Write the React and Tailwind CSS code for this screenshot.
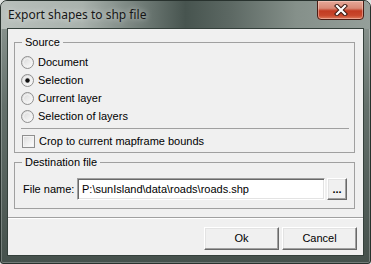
import React from "react";

const font = "font-['Liberation_Sans',Arial,sans-serif]";

const Radio = ({ checked, label }) => (
  <div className="flex items-center h-[18px] pl-[6px] gap-[4px]">
    <svg width="13" height="13" viewBox="0 0 13 13">
      <defs>
        <linearGradient id="radioFill" x1="0" y1="0" x2="1" y2="1">
          <stop offset="0" stopColor="#d4d4d4" />
          <stop offset="1" stopColor="#ffffff" />
        </linearGradient>
      </defs>
      <circle cx="6.5" cy="6.5" r="6" fill="url(#radioFill)" stroke="#8f8f8f" />
      <circle cx="6.5" cy="6.5" r="4" fill="none" stroke="#f4f4f4" />
      {checked && <circle cx="6.5" cy="6.5" r="2.2" fill="#111" />}
    </svg>
    <span>{label}</span>
  </div>
);

const ClassicButton = ({ children, className = "" }) => (
  <button
    className={`bg-[#f0f0f0] border border-t-white border-l-white border-b-[#696969] border-r-[#696969] shadow-[inset_-1px_-1px_0_#a0a0a0,inset_1px_1px_0_#e3e3e3] text-black ${className}`}
  >
    {children}
  </button>
);

const App = () => {
  return (
    <div className="w-[371px] h-[264px] bg-[#dfe3e1]">
      <div className="relative w-full h-full flex flex-col rounded-t-[7px] rounded-b-[3px] border border-[#28322e] overflow-hidden bg-[linear-gradient(180deg,#929c97_0%,#64706b_40%,#45514c_100%)] shadow-[inset_0_0_0_1px_rgba(255,255,255,0.25)]">
        {/* title bar */}
        <div className="h-[28px] shrink-0 flex items-center pl-[7px] bg-[linear-gradient(90deg,#b9c0bc_0%,#a9b2ad_22%,#6a7671_40%,#47544f_50%,#5c6863_62%,#85908a_80%,#959f9a_100%)]">
          <span className="font-['Noto_Sans',sans-serif] text-[12px] text-[#161616] [text-shadow:0_0_6px_rgba(255,255,255,0.8)]">
            Export shapes to shp file
          </span>
        </div>
        <div className="absolute top-[-1px] right-[6px] w-[47px] h-[20px] rounded-b-[4px] border border-[#4b1c14] bg-[linear-gradient(180deg,#e6a898_0%,#d98a77_40%,#c23b22_55%,#c8472c_80%,#dd7a5c_100%)] shadow-[inset_0_0_0_1px_rgba(255,220,210,0.45)] flex items-center justify-center">
          <svg width="14" height="12" viewBox="0 0 14 12">
            <path d="M3 2 L11 10 M11 2 L3 10" stroke="#3d1a12" strokeWidth="4.2" strokeLinecap="square" />
            <path d="M3 2 L11 10 M11 2 L3 10" stroke="#ffffff" strokeWidth="2.2" strokeLinecap="square" />
          </svg>
        </div>

        {/* client area */}
        <div className={`ml-[7px] w-[355px] h-[226px] shrink-0 bg-[#f0f0f0] shadow-[0_0_0_1px_#34403b] flex flex-col text-[11px] text-black ${font}`}>
          <fieldset className="mt-[7px] ml-[6px] w-[341px] border border-[#a0a0a0] pb-[4px]">
            <legend className="ml-[7px] px-[3px] leading-[13px]">Source</legend>
            <div className="mt-[4px] flex flex-col">
              <Radio label="Document" />
              <Radio label="Selection" checked />
              <Radio label="Current layer" />
              <Radio label="Selection of layers" />
            </div>
            <div className="mt-[3px] ml-[6px] mr-[5px] h-px bg-[#a0a0a0]" />
            <div className="mt-[5px] h-[14px] flex items-center pl-[7px] gap-[4px]">
              <div className="w-[13px] h-[13px] border border-[#8f8f8f] bg-[linear-gradient(135deg,#dcdcdc_0%,#ffffff_100%)] shadow-[inset_0_0_0_1px_#f4f4f4]" />
              <span>Crop to current mapframe bounds</span>
            </div>
          </fieldset>

          <fieldset className="mt-[3px] ml-[6px] w-[341px] border border-[#a0a0a0] pb-[8px]">
            <legend className="ml-[7px] px-[3px] leading-[13px]">Destination file</legend>
            <div className="mt-[9px] h-[22px] flex items-center">
              <span className="pl-[8px] w-[62px] shrink-0">File name:</span>
              <div className="w-[248px] h-[22px] bg-white border border-t-[#a0a0a0] border-l-[#a0a0a0] border-b-white border-r-white shadow-[inset_1px_1px_0_#696969,inset_-1px_-1px_0_#e3e3e3] flex items-center pl-[4px]">
                P:\sunIsland\data\roads\roads.shp
              </div>
              <ClassicButton className="ml-[2px] w-[20px] h-[22px] flex items-end justify-center pb-[4px] leading-none font-bold text-[#2a1a6a]">
                ...
              </ClassicButton>
            </div>
          </fieldset>

          <div className="mt-[8px] h-px bg-[#a0a0a0]" />
          <div className="h-px bg-white" />

          <div className="mt-[8px] flex justify-end gap-[3px] pr-[6px]">
            <ClassicButton className="w-[75px] h-[23px]">Ok</ClassicButton>
            <ClassicButton className="w-[75px] h-[23px]">Cancel</ClassicButton>
          </div>
        </div>
      </div>
    </div>
  );
};

export default App;
